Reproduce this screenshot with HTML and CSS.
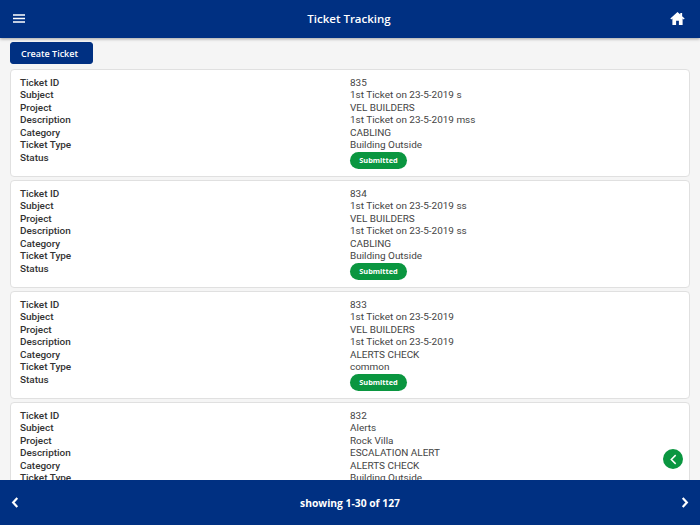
FILE: index.html
```html
<!DOCTYPE html>
<html lang="en">
<head>
<meta charset="utf-8">
<title>Ticket Tracking</title>
<link rel="stylesheet" href="styles.css">
</head>
<body>
<div class="app">
  <header class="topbar">
    <svg class="icon-menu" viewBox="0 0 12 9" width="12" height="9"><path d="M0 1h12M0 4.500h12M0 8h12" stroke="#fff" stroke-width="1.500"/></svg>
    <h1 class="title">Ticket Tracking</h1>
    <svg class="icon-home" viewBox="0 0 16 14" width="15" height="13"><path fill="#fff" d="M8 0 .3 7l.9 1L2.500 6.900V14h4V9.500h3V14h4V6.900L14.800 8l.9-1L13 4.500V1h-2v1.700z"/></svg>
  </header>
  <main class="content">
    <button class="create">Create Ticket</button>
    <section class="card">
      <div class="labels"><div>Ticket ID</div><div>Subject</div><div>Project</div><div>Description</div><div>Category</div><div>Ticket Type</div><div>Status</div></div>
      <div class="values"><div>835</div><div>1st Ticket on 23-5-2019 s</div><div>VEL BUILDERS</div><div>1st Ticket on 23-5-2019 mss</div><div>CABLING</div><div>Building Outside</div><span class="badge">Submitted</span></div>
    </section>
    <section class="card">
      <div class="labels"><div>Ticket ID</div><div>Subject</div><div>Project</div><div>Description</div><div>Category</div><div>Ticket Type</div><div>Status</div></div>
      <div class="values"><div>834</div><div>1st Ticket on 23-5-2019 ss</div><div>VEL BUILDERS</div><div>1st Ticket on 23-5-2019 ss</div><div>CABLING</div><div>Building Outside</div><span class="badge">Submitted</span></div>
    </section>
    <section class="card">
      <div class="labels"><div>Ticket ID</div><div>Subject</div><div>Project</div><div>Description</div><div>Category</div><div>Ticket Type</div><div>Status</div></div>
      <div class="values"><div>833</div><div>1st Ticket on 23-5-2019</div><div>VEL BUILDERS</div><div>1st Ticket on 23-5-2019</div><div>ALERTS CHECK</div><div>common</div><span class="badge">Submitted</span></div>
    </section>
    <section class="card">
      <div class="labels"><div>Ticket ID</div><div>Subject</div><div>Project</div><div>Description</div><div>Category</div><div>Ticket Type</div><div>Status</div></div>
      <div class="values"><div>832</div><div>Alerts</div><div>Rock Villa</div><div>ESCALATION ALERT</div><div>ALERTS CHECK</div><div>Building Outside</div><span class="badge">Submitted</span></div>
    </section>
  </main>
  <div class="fab"><svg viewBox="0 0 8 12" width="7" height="11"><path d="M6.500 1 1.500 6l5 5" fill="none" stroke="#fff" stroke-width="1.700"/></svg></div>
  <footer class="bottombar">
    <svg class="chev" viewBox="0 0 8 12" width="8" height="11"><path d="M6.500 1.200 2 6l4.500 4.800" fill="none" stroke="#fff" stroke-width="2.400"/></svg>
    <span class="showing">showing 1-30 of 127</span>
    <svg class="chev" viewBox="0 0 8 12" width="8" height="11"><path d="M1.500 1.200 6 6l-4.500 4.800" fill="none" stroke="#fff" stroke-width="2.400"/></svg>
  </footer>
</div>
</body>
</html>
```

FILE: styles.css
```css
* { box-sizing: border-box; }
html, body { margin: 0; height: 100%; }
body { font-family: Roboto, sans-serif; background: #f5f5f5; }
.app { position: relative; width: 700px; height: 525px; display: flex; flex-direction: column; overflow: hidden; }
.topbar { height: 38px; flex: none; background: #003082; display: grid; grid-template-columns: 1fr auto 1fr; align-items: center; padding: 0 15px 2px 13px; box-shadow: 0 1px 3px rgba(0,0,0,.35); position: relative; z-index: 1; }
.icon-home { justify-self: end; }
.title { margin: 0; font: 600 11.500px "Open Sans", sans-serif; color: #fff; }
.content { flex: 1; min-height: 0; overflow: hidden; padding: 4px 10px 0; }
.create { display: block; width: 83px; height: 22px; padding: 0 4px 0 0; border: 1px solid #003082; border-radius: 3px; background: #003082; color: #fff; font: 600 9px "Open Sans", sans-serif; margin-bottom: 5px; }
.card { height: 108px; margin-bottom: 3px; padding: 6.500px 9px 0; background: #fff; border: 1px solid #e0e0e0; border-radius: 4px; display: flex; font-size: 9.950px; line-height: 12.500px; color: #444; }
.labels { width: 330px; font-weight: 500; color: #333; }
.badge { display: inline-block; width: 57px; height: 17px; border-radius: 9px; background: #0a9640; color: #fff; font: 700 7.400px/16px "Open Sans", sans-serif; text-align: center; vertical-align: top; }
.fab { position: absolute; left: 663px; top: 449px; width: 20px; height: 20px; border-radius: 50%; background: #0a9640; display: flex; align-items: center; justify-content: center; }
.bottombar { height: 45px; flex: none; background: #003082; display: flex; align-items: center; justify-content: space-between; padding: 0 11px; position: relative; z-index: 1; }
.showing { font: 700 10.300px "Open Sans", sans-serif; color: #fff; }
.chev { display: block; }
```
